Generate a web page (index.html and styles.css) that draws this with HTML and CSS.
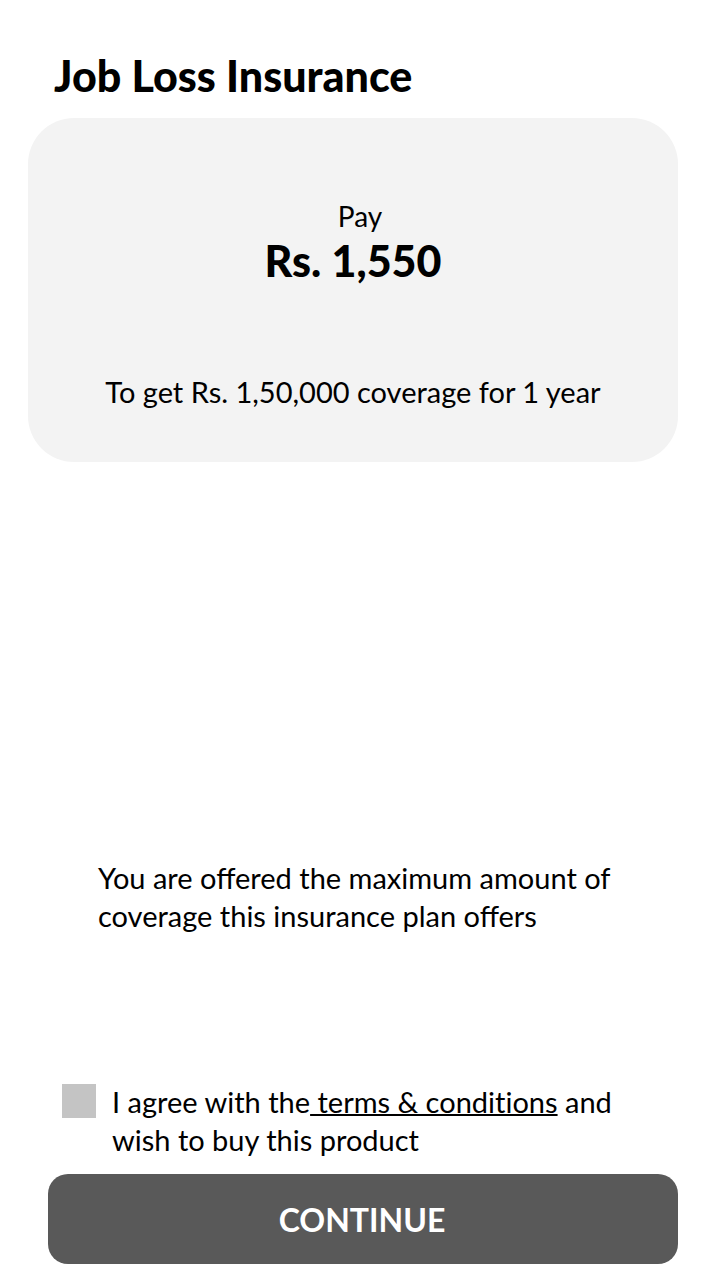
FILE: index.html
```html
<!DOCTYPE html>
<html lang="en">
<head>
<meta charset="utf-8">
<meta name="viewport" content="width=device-width, initial-scale=1">
<title>Job Loss Insurance</title>
<link rel="stylesheet" href="styles.css">
</head>
<body>
<main class="page">
  <h1 class="title">Job Loss Insurance</h1>
  <section class="card">
    <p class="pay">Pay</p>
    <p class="amount">Rs. 1,550</p>
    <p class="coverage">To get Rs. 1,50,000 coverage for 1 year</p>
  </section>
  <p class="note">You are offered the maximum amount of<br>coverage this insurance plan offers</p>
  <form class="form">
    <div class="agree">
      <input class="box" type="checkbox" id="agree">
      <label for="agree">I agree with the<a class="terms" href="#terms"> terms &amp; conditions</a> and<br>wish to buy this product</label>
    </div>
    <button class="continue" type="button">CONTINUE</button>
  </form>
</main>
</body>
</html>
```
FILE: styles.css
```css
* { box-sizing: border-box; }
body {
  margin: 0;
  background: #fff;
  color: #000;
  font-family: Lato, "Open Sans", sans-serif;
  font-size: 29px;
  line-height: 38px;
}
h1, p { margin: 0; }
.page {
  display: flex;
  flex-direction: column;
  min-height: 100vh;
  padding: 50px 42px 16px 28px;
}
.title,
.amount {
  font-size: 43px;
  line-height: 52px;
  font-weight: 900;
}
.title { padding-left: 26px; }
.card {
  margin-top: 16px;
  padding: 79px 0 51px;
  border-radius: 46px;
  background: #f3f3f3;
  text-align: center;
}
.pay {
  padding-left: 14px;
  font-size: 28px;
}
.coverage { margin-top: 86px; }
.note {
  margin-top: auto;
  padding-left: 70px;
}
.form {
  display: flex;
  flex-direction: column;
  gap: 15px;
  margin-top: 148px;
  padding-left: 20px;
}
.agree {
  display: flex;
  gap: 16px;
  padding-left: 14px;
}
.box {
  appearance: none;
  flex: none;
  width: 34px;
  height: 34px;
  margin: 1px 0 0;
  background: #c4c4c4;
}
.box:checked { background: #595959; }
.terms {
  color: inherit;
  font-variant-ligatures: no-common-ligatures;
  text-decoration-thickness: 2px;
  text-decoration-skip-ink: none;
}
.continue {
  height: 90px;
  padding: 2px 2px 0 0;
  border: 0;
  border-radius: 20px;
  background: #595959;
  color: #fff;
  font: 700 32px/40px Lato, sans-serif;
}
```
